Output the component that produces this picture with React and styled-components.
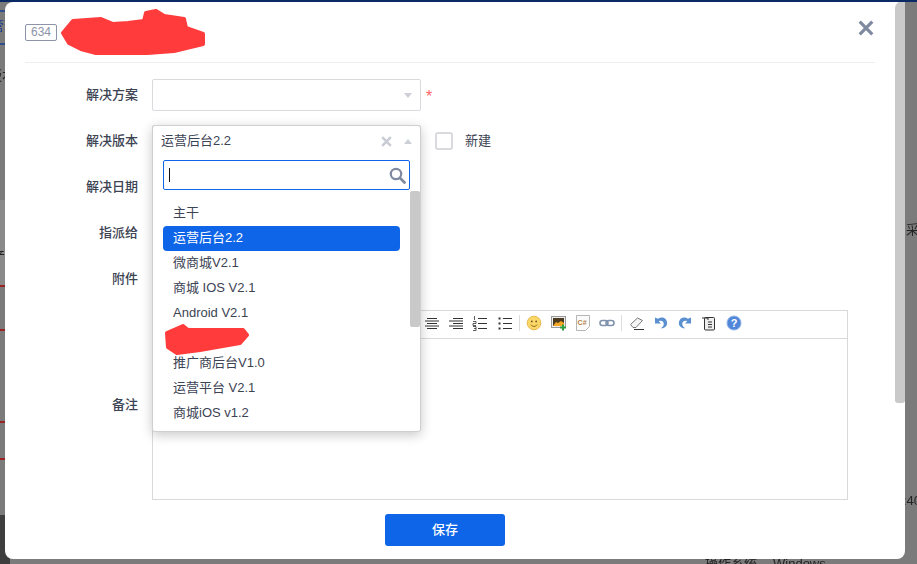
import styled, { createGlobalStyle } from "styled-components";

const GlobalStyle = createGlobalStyle`
  html, body { margin: 0; height: 100%; overflow: hidden; }
  body {
    background: #7b7b7b;
    font-family: "Liberation Sans", "Noto Sans CJK SC", sans-serif;
    font-size: 13px;
    color: #3c4353;
  }
`;

const versions = ["主干", "运营后台2.2", "微商城V2.1", "商城 IOS V2.1", "Android V2.1", "", "推广商后台V1.0", "运营平台 V2.1", "商城iOS v1.2"];

const toolGroups = [
  ["center", "right", "ol", "ul"],
  ["smile", "image", "code", "link"],
  ["eraser", "undo", "redo", "paste", "help"],
];

function Caret({ up }) {
  return <CaretMark $up={up} />;
}

function SearchIcon() {
  return (
    <svg width="17" height="17" viewBox="0 0 17 17" fill="none" stroke="#7f8aa0" strokeWidth="2.2">
      <circle cx="7" cy="7" r="5.2" />
      <path d="M11 11l4.5 4.5" strokeWidth="2.8" strokeLinecap="round" />
    </svg>
  );
}

function Cross({ size, color, width }) {
  return (
    <svg width={size} height={size} viewBox="0 0 14 14" fill="none" stroke={color} strokeWidth={width}>
      <path d="M1.5 1.5l11 11M12.5 1.5l-11 11" />
    </svg>
  );
}

// the scribbled-over parts of the screenshot
function Blob({ width, height, d }) {
  return (
    <svg width={width} height={height} viewBox={`0 0 ${width} ${height}`}>
      <path d={d} fill="#ff3b3b" stroke="#ff3b3b" strokeWidth="4" strokeLinejoin="round" />
    </svg>
  );
}

function ToolIcon({ name }) {
  if (name === "center" || name === "right") {
    const short = name === "center" ? [3, 1, 3, 1, 3] : [5, 1, 5, 1, 5];
    const end = name === "center" ? 13 : 15;
    return (
      <svg width="16" height="16" viewBox="0 0 16 16" stroke="#333" strokeWidth="1">
        {short.map((s, i) => <path key={i} d={`M${s} ${3.5 + i * 2.5}H${i % 2 ? 15 : end}`} />)}
      </svg>
    );
  }
  if (name === "ol") {
    return (
      <svg width="16" height="16" viewBox="0 0 16 16" stroke="#333" strokeWidth="1">
        <path d="M6 3.5h9M6 8.5h9M6 13.5h9" />
        <path d="M2.5 1v4M1 6.500h3v2H1v2h3M1 11.500h3v4H1M2 13.500h2" strokeWidth=".8" fill="none" />
      </svg>
    );
  }
  if (name === "ul") {
    return (
      <svg width="16" height="16" viewBox="0 0 16 16" stroke="#333" strokeWidth="1">
        <path d="M6 3.5h9M6 8.5h9M6 13.5h9" />
        <path d="M1.500 3.500h2M1.500 8.500h2M1.500 13.500h2" strokeWidth="2" />
      </svg>
    );
  }
  if (name === "smile") {
    return (
      <svg width="16" height="16" viewBox="0 0 16 16">
        <circle cx="8" cy="8" r="6.800" fill="#fbd767" stroke="#e6b84a" />
        <circle cx="5.800" cy="6.400" r=".9" fill="#6b5520" />
        <circle cx="10.200" cy="6.400" r=".9" fill="#6b5520" />
        <path d="M4.800 9.600c1.600 2.400 4.800 2.400 6.400 0" fill="none" stroke="#8a6a20" />
      </svg>
    );
  }
  if (name === "image") {
    return (
      <svg width="16" height="16" viewBox="0 0 16 16">
        <rect x=".5" y="1.500" width="14" height="11" fill="#eee" stroke="#999" />
        <rect x="2" y="3" width="11" height="8" fill="#4a3a20" />
        <path d="M2 11l3-4 2 1 3-2 3 2v3z" fill="#f5a623" />
        <path d="M12 9.500v6M9 12.500h6" stroke="#2e9e3e" strokeWidth="2" />
      </svg>
    );
  }
  if (name === "code") {
    return (
      <svg width="16" height="16" viewBox="0 0 16 16">
        <path d="M1.500.5h13v11l-4 4h-9z" fill="#fbfbfb" stroke="#b5b5b5" />
        <text x="2.600" y="10" fontSize="7" fontFamily="Liberation Sans" fontWeight="700" fill="#b8824a">C#</text>
      </svg>
    );
  }
  if (name === "link") {
    return (
      <svg width="16" height="16" viewBox="0 0 16 16" fill="none" stroke="#7f92ad" strokeWidth="1.600">
        <rect x="1" y="5.500" width="8" height="5" rx="2.500" />
        <rect x="7" y="5.500" width="8" height="5" rx="2.500" />
      </svg>
    );
  }
  if (name === "eraser") {
    return (
      <svg width="16" height="16" viewBox="0 0 16 16">
        <path d="M1.500 9.500l7-6.500 5 2.500-6.500 7H4z" fill="#f4f4f4" stroke="#777" />
        <path d="M5 14.500h10" stroke="#333" />
      </svg>
    );
  }
  if (name === "undo" || name === "redo") {
    return (
      <svg width="16" height="16" viewBox="0 0 16 16" style={name === "redo" ? { transform: "scaleX(-1)" } : undefined}>
        <path d="M2 2.500v6h6L5.800 6.300c2.500-1.400 5.400.4 4.900 3.200-.3 1.600-1.400 3-3 3.800 4 .4 6.800-2.400 6.400-5.800C13.700 3.200 9 1 5 3.800L2 2.500z" fill="#5a8fd0" />
      </svg>
    );
  }
  if (name === "paste") {
    return (
      <svg width="16" height="16" viewBox="0 0 16 16">
        <rect x="3.500" y="2.500" width="10" height="12.500" rx="1" fill="#eee" stroke="#333" />
        <path d="M1 3h6v2" fill="none" stroke="#333" />
        <path d="M7 7h4M7 9.500h4M7 12h4" stroke="#333" />
      </svg>
    );
  }
  return (
    <svg width="16" height="16" viewBox="0 0 16 16">
      <circle cx="8" cy="8" r="7" fill="#4f86d9" stroke="#8fb3e8" />
      <text x="8" y="12" textAnchor="middle" fontSize="11" fontWeight="700" fontFamily="Liberation Sans" fill="#fff">?</text>
    </svg>
  );
}

function App() {
  return (
    <>
      <GlobalStyle />
      <BackPage>
        <TopStripe />
        <BackBand $top={200} $height={85} $bg="#8a8a8a" />
        <BackBand $top={515} $height={49} $bg="#3e3e3e" />
        <BackRule $top={10} $color="#2f4f8f" />
        <BackRule $top={43} $color="#2f4f8f" />
        <BackRule $top={285} $color="#9c2222" />
        <BackRule $top={329} $color="#9c2222" />
        <BackRule $top={421} $color="#9c2222" />
        <BackRule $top={458} $color="#9c2222" />
        <BackText $top={15} $left={-9} $color="#1c3f8f">管理</BackText>
        <BackText $top={65} $left={-11} $color="#222">版本</BackText>
        <BackText $top={245} $left={-8} $color="#222">产品</BackText>
        <BackText $top={219} $left={906} $color="#222">采</BackText>
        <BackText $top={493} $left={903} $color="#222">:40</BackText>
        <BackText $top={553} $left={705} $color="#222">操作系统<BackGap />Windows</BackText>
      </BackPage>
      <Overlay>
        <Modal>
          <Header>
            <IdTag>634</IdTag>
            <Blob width="144" height="46" d="M2 24L12 12L40 10L52 15L67 14L83 12L85 4L95 2L103 7L123 10L125 19L142 25L142 35L113 42L73 45L35 44L20 40L8 34Z" />
          </Header>
          <Form>
            <Row>
              <Label>解决方案</Label>
              <SelectBox>
                <Caret />
              </SelectBox>
              <Required>*</Required>
            </Row>
            <Row>
              <Label>解决版本</Label>
              <SelectWrap>
                <SelectBox />
                <Dropdown>
                  <DropHead>
                    <SelectValue>运营后台2.2</SelectValue>
                    <Cross size="11" color="#c9ccd4" width="3.200" />
                    <Caret up />
                  </DropHead>
                  <SearchBox>
                    <Cursor />
                    <SearchIcon />
                  </SearchBox>
                  <OptionsArea>
                    <OptionList>
                      {versions.map((v, i) =>
                        v ? (
                          <Option key={v} $active={i === 1}>{v}</Option>
                        ) : (
                          <Option key="hidden">
                            <BlobOver>
                              <Blob width="84" height="31" d="M2 9L18 2L23 6L78 6L82 11L75 19L52 23L35 26L12 29L3 23Z" />
                            </BlobOver>
                          </Option>
                        )
                      )}
                    </OptionList>
                    <ListThumb />
                  </OptionsArea>
                </Dropdown>
              </SelectWrap>
              <Check />
              <CheckLabel>新建</CheckLabel>
            </Row>
            <Row>
              <Label>解决日期</Label>
              <SelectBox />
            </Row>
            <Row>
              <Label>指派给</Label>
              <SelectBox />
            </Row>
            <Row>
              <Label>附件</Label>
            </Row>
            <EditorRow>
              <Label>备注</Label>
              <Editor>
                <Toolbar>
                  {toolGroups.map((group, g) => (
                    <ToolGroup key={g}>
                      {g > 0 && <ToolSep />}
                      {group.map((name) => (
                        <ToolCell key={name}>
                          <ToolIcon name={name} />
                        </ToolCell>
                      ))}
                    </ToolGroup>
                  ))}
                </Toolbar>
              </Editor>
            </EditorRow>
            <Footer>
              <SaveButton>保存</SaveButton>
            </Footer>
          </Form>
          <CloseButton>
            <Cross size="16" color="#7f8aa0" width="2.800" />
          </CloseButton>
          <ModalThumb />
        </Modal>
      </Overlay>
    </>
  );
}

const BackPage = styled.div`
  position: fixed;
  inset: 0;
  overflow: hidden;
`;
const TopStripe = styled.div`
  height: 2px;
  background: #0b2a63;
`;
const BackBand = styled.div`
  position: absolute;
  left: 0;
  width: 10px;
  top: ${(p) => p.$top}px;
  height: ${(p) => p.$height}px;
  background: ${(p) => p.$bg};
`;
const BackRule = styled.div`
  position: absolute;
  left: 0;
  width: 10px;
  top: ${(p) => p.$top}px;
  height: 2px;
  background: ${(p) => p.$color};
`;
const BackText = styled.span`
  position: absolute;
  top: ${(p) => p.$top}px;
  left: ${(p) => p.$left}px;
  color: ${(p) => p.$color};
  white-space: nowrap;
`;
const BackGap = styled.span`
  display: inline-block;
  width: 16px;
`;
const Overlay = styled.div`
  position: fixed;
  inset: 0;
  padding: 2px 12px 5px 5px;
  display: flex;
`;
const Modal = styled.div`
  position: relative;
  flex: 1;
  background: #fff;
  border-radius: 8px;
  padding: 0 30px 0 20px;
  display: flex;
  flex-direction: column;
`;
const Header = styled.div`
  height: 61px;
  border-bottom: 1px solid #eee;
  box-sizing: border-box;
  display: flex;
  align-items: center;
  gap: 4px;
  flex: none;
`;
const IdTag = styled.span`
  width: 32px;
  height: 17px;
  box-sizing: border-box;
  border: 1px solid #8d93a8;
  border-radius: 2px;
  color: #8d93a8;
  font-size: 12px;
  line-height: 15px;
  text-align: center;
  margin-top: 1px;
`;
const CloseButton = styled.div`
  position: absolute;
  top: 18px;
  right: 31px;
  line-height: 0;
`;
const ModalThumb = styled.div`
  position: absolute;
  top: 0;
  right: 0;
  width: 10px;
  height: 401px;
  background: #c9c9c9;
  border-radius: 6px 0 3px 3px;
`;
const Form = styled.div`
  padding-top: 16px;
  display: flex;
  flex-direction: column;
  gap: 14px;
`;
const Row = styled.div`
  display: flex;
  align-items: center;
  height: 32px;
`;
const Label = styled.label`
  width: 113px;
  margin-right: 14px;
  padding-bottom: 4px;
  flex: none;
  text-align: right;
  font-weight: 500;
  color: #3c4353;
`;
const SelectWrap = styled.div`
  position: relative;
  flex: none;
`;
const SelectBox = styled.div`
  width: 269px;
  height: 32px;
  box-sizing: border-box;
  border: 1px solid #d9d9de;
  border-radius: 2px;
  display: flex;
  align-items: center;
  justify-content: flex-end;
  padding: 0 8px;
  background: #fff;
`;
const SelectValue = styled.span`
  flex: 1;
  padding-bottom: 4px;
  color: #3c4353;
`;
const CaretMark = styled.span`
  width: 0;
  height: 0;
  margin-left: 12px;
  border-left: 4px solid transparent;
  border-right: 4px solid transparent;
  ${(p) => (p.$up ? "border-bottom: 5px solid #cdd0d8;" : "border-top: 5px solid #cdd0d8;")}
`;
const Required = styled.span`
  margin-left: 5px;
  padding-top: 3px;
  color: #ff6464;
  font-size: 16px;
`;
const Check = styled.div`
  width: 18px;
  height: 18px;
  box-sizing: border-box;
  border: 2px solid #d9d9de;
  border-radius: 3px;
  margin-left: 14px;
`;
const CheckLabel = styled.span`
  margin-left: 12px;
  padding-bottom: 4px;
`;
const Dropdown = styled.div`
  position: absolute;
  top: 0;
  left: 0;
  z-index: 2;
  width: 269px;
  height: 307px;
  box-sizing: border-box;
  background: #fff;
  border: 1px solid #cfcfcf;
  border-radius: 3px;
  box-shadow: 0 3px 12px rgba(0, 0, 0, 0.22);
  display: flex;
  flex-direction: column;
`;
const DropHead = styled.div`
  height: 30px;
  flex: none;
  display: flex;
  align-items: center;
  padding: 0 8px;
`;
const SearchBox = styled.div`
  height: 30px;
  flex: none;
  box-sizing: border-box;
  margin: 4px 10px 0 10px;
  border: 1px solid #0f65e8;
  border-radius: 2px;
  display: flex;
  align-items: center;
  justify-content: space-between;
  padding: 0 3px 0 5px;
`;
const Cursor = styled.span`
  width: 1px;
  height: 14px;
  background: #111;
`;
const OptionsArea = styled.div`
  position: relative;
  flex: 1;
`;
const OptionList = styled.div`
  padding: 11px 20px 0 10px;
`;
const Option = styled.div`
  position: relative;
  height: 25px;
  line-height: 24px;
  padding-left: 10px;
  border-radius: 4px;
  background: ${(p) => (p.$active ? "#0f65e8" : "transparent")};
  color: ${(p) => (p.$active ? "#fff" : "#3c4353")};
`;
const BlobOver = styled.div`
  position: absolute;
  left: 2px;
  top: -2px;
  line-height: 0;
`;
const ListThumb = styled.div`
  position: absolute;
  top: 1px;
  right: 0;
  width: 10px;
  height: 136px;
  background: #c9c9c9;
  border-radius: 2px;
`;
const EditorRow = styled.div`
  display: flex;
  align-items: center;
  margin-top: 1px;
`;
const Editor = styled.div`
  width: 696px;
  height: 190px;
  box-sizing: border-box;
  border: 1px solid #d9d9d9;
`;
const Toolbar = styled.div`
  height: 28px;
  box-sizing: border-box;
  border-bottom: 1px solid #d9d9d9;
  display: flex;
  align-items: center;
  padding: 0 0 3px 267px;
`;
const ToolGroup = styled.div`
  display: flex;
  align-items: center;
`;
const ToolCell = styled.span`
  width: 24.2px;
  display: flex;
  justify-content: center;
`;
const ToolSep = styled.span`
  width: 1px;
  height: 16px;
  margin: 0 2.3px;
  background: #ddd;
`;
const Footer = styled.div`
  display: flex;
  justify-content: center;
  padding-right: 10px;
`;
const SaveButton = styled.button`
  width: 120px;
  height: 32px;
  border: 0;
  padding: 0 0 3px;
  border-radius: 3px;
  background: #0f65e8;
  color: #fff;
  font: inherit;
  font-weight: 500;
`;

export default App;
